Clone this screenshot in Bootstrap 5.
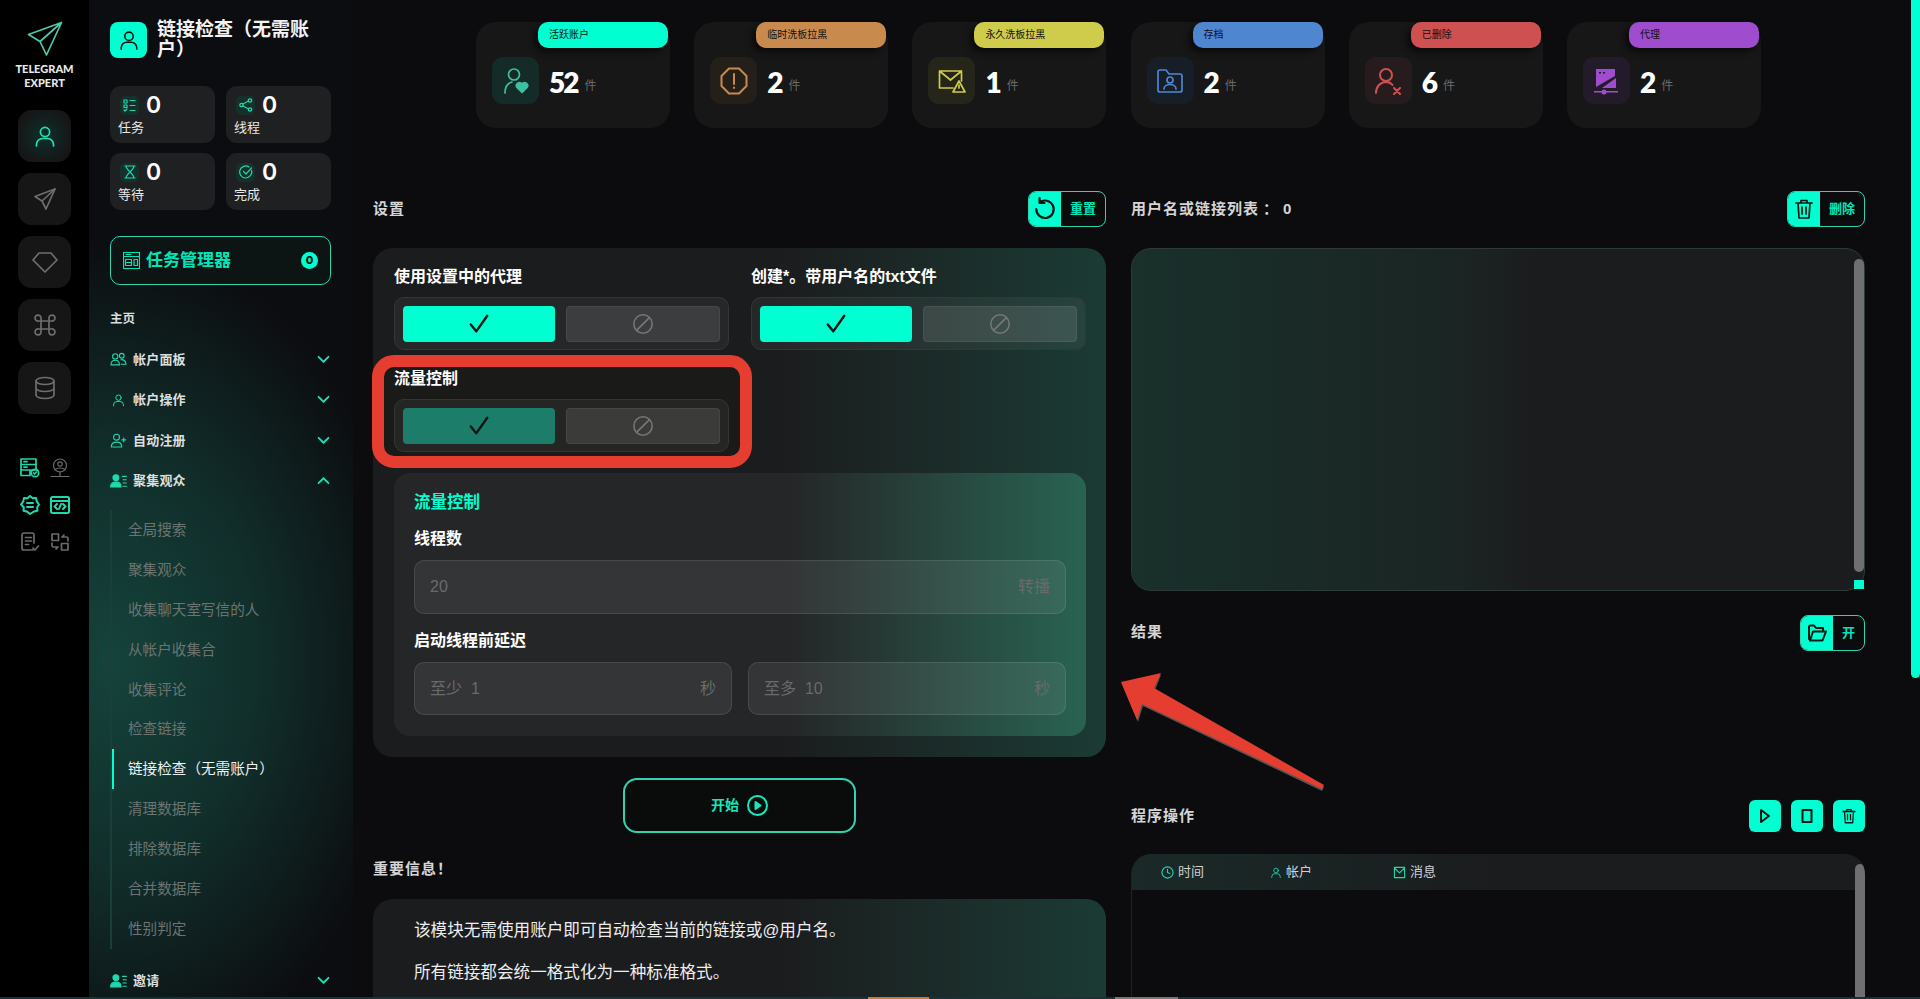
<!DOCTYPE html>
<html lang="zh-CN">
<head>
  <meta charset="UTF-8">
  <meta name="viewport" content="width=device-width, initial-scale=1">
  <title>Telegram Expert</title>
  <link href="https://cdn.jsdelivr.net/npm/bootstrap@5.3.0/dist/css/bootstrap.min.css" rel="stylesheet">
  <style>
    html, body { height: 999px; overflow: hidden; }
    body { background: #0c0c0f; color: #fff; font-family: "Liberation Sans", "Noto Sans CJK SC", sans-serif; position: relative; }
    svg { display: block; flex: none; }
    .ln { fill: none; stroke: currentColor; stroke-width: 1.7; stroke-linecap: round; stroke-linejoin: round; }
    .sw-1 { stroke-width: 1.2; }
    .sw-2 { stroke-width: 2; }
    .sw-3 { stroke-width: 2.6; }
    .flip-y { transform: scaleY(-1); }

    /* icon rail */
    .rail { width: 89px; height: 999px; background: #000; flex: none; padding-top: 21px; }
    .rail-logo { color: #4fc7ab; }
    .rail-name { font: 900 11px/14px Lato, "Liberation Sans", sans-serif; color: #e6e9e8; text-align: center; margin-top: 5px; margin-bottom: 20px; }
    .rail-btn { width: 53px; height: 52px; border-radius: 14px; background: #161617; color: #6e6e6e; margin: 0 auto 11px; }
    .rail-btn.on { color: #1fe0b4; background: radial-gradient(circle, #0f2c28 10%, #161617 75%); }
    .rail-tools { margin-top: 44px; display: grid; grid-template-columns: 20px 20px; gap: 17px 10px; justify-content: center; }
    .rail-tools svg { color: #1fd8ad; }
    .rail-tools .dim { color: #6b6b6b; }

    /* sidebar */
    .side { width: 264px; height: 999px; flex: none; padding: 22px 22px 0 21px; overflow: hidden;
      background: radial-gradient(ellipse 300px 420px at 8% 66%, #15433b 0%, #112e2b 50%, transparent 100%), #0c0d10; }
    .side-icon { width: 37px; height: 36px; border-radius: 8px; background: #00ffd1; color: #0b1512; }
    .side-head { gap: 10px; }
    .side-title { font-size: 19px; line-height: 20px; font-weight: 700; width: 160px; margin-top: -2px; color: #f2f2f2; }
    .stat-grid { display: grid; grid-template-columns: 105px 105px; gap: 10px 11px; margin-top: 26px; }
    .stat-box { height: 57px; border-radius: 11px; background: #1f2021; padding: 9px 8px 0; }
    .stat-glyph { width: 19px; height: 19px; color: #1fd8ad; border-radius: 5px; background: #16302b; margin-left: 2px; }
    .stat-num { font: 600 23px/20px Inter, sans-serif; margin-left: 7px; }
    .stat-label { font-size: 13px; line-height: 16px; margin-top: 5px; color: #e8e8e8; }
    .task-btn { height: 49px; border: 1px solid #2fd4b0; border-radius: 10px; margin-top: 26px; padding: 0 12px; color: #00e6bb; font-size: 17px; font-weight: 700; background: #0d1514; }
    .task-btn .ln { margin-right: 6px; }
    .task-count { width: 17px; height: 17px; border-radius: 50%; background: #00ffd1; color: #0b1512; font: 800 11px/17px Inter, sans-serif; text-align: center; }
    .side-home { font-size: 12.5px; font-weight: 700; margin-top: 26px; line-height: 16px; color: #dcdcdc; margin-bottom: 12px; }
    .menu-row { height: 40.5px; font-size: 13px; font-weight: 700; color: #dcdfde; letter-spacing: .2px; padding-right: 1px; }
    .menu-row svg { color: #1fd8ad; }
    .menu-row svg:first-child { margin-right: 6px; }
    .menu-row .chev { color: #1ee0b6; }
    .sub-list { border-left: 2px solid #1a3e39; padding: 0; margin: 9px 0 11.5px; list-style: none; }
    .sub-list li { height: 39.9px; line-height: 40px; padding-left: 16px; font-size: 14.6px; color: #6c7472; white-space: nowrap; position: relative; }
    .sub-list li.on { color: #eef2f1; }
    .sub-list li.on::before { content: ""; position: absolute; left: 0; top: 0; bottom: 0; width: 2px; background: #00ffd1; }

    /* main area */
    .main { flex: 1; min-width: 0; height: 999px; overflow: hidden; padding: 22px 55px 0 20px; }
    .top-stats { display: flex; gap: 24.2px; padding-left: 103px; }
    .top-card { width: 194px; height: 106px; border-radius: 20px; background: #171718; position: relative; padding: 35px 0 0 16px; }
    .top-pill { position: absolute; right: 2px; top: 0; width: 130px; height: 26px; border-radius: 10px; color: #111; font-size: 10px; line-height: 26px; padding-left: 11px; box-shadow: -4px 4px 6px rgba(0,0,0,.55); background: var(--tone); }
    .top-glyph { width: 47px; height: 47px; border-radius: 11px; color: var(--tone); background: var(--tone-dim); }
    .top-num { font: 800 28px/30px Lato, sans-serif; letter-spacing: -2px; margin: 10px 0 0 10px; }
    .top-unit { font-size: 12px; line-height: 18px; color: #6a6a6a; margin: 20px 0 0 7px; }
    .tone-a { --tone: #00ffd1; --tone-dim: #15291f; }
    .tone-a .top-glyph { color: #3fbfa1; background: #152b27; }
    .tone-b { --tone: #c98a4e; --tone-dim: #251f1a; }
    .tone-c { --tone: #cfcb4b; --tone-dim: #252519; }
    .tone-d { --tone: #4f86d0; --tone-dim: #181e28; }
    .tone-e { --tone: #cf5050; --tone-dim: #271c1d; }
    .tone-f { --tone: #a04ccf; --tone-dim: #241b2a; }
    .hole { fill: var(--tone-dim); }

    .columns { display: grid; grid-template-columns: 733px 734px; gap: 25px; margin-top: 63px; }
    .head-row { height: 36px; margin-bottom: 21px; }
    .head-text { font-size: 15px; font-weight: 700; color: #d5d5d5; letter-spacing: 1px; }
    .count-sep { font-family: "Noto Sans CJK TC", sans-serif; margin: 0 4px; }
    .split-btn { height: 36px; border: 1px solid #2fd4b0; border-radius: 8px; overflow: hidden; color: #00e6bb; font-size: 13px; font-weight: 700; }
    .split-icon { width: 32px; height: 100%; background: #00ffd1; color: #0b1512; }
    .split-txt { padding: 0 9px; background: #0a0c0c; }
    .ctl-btn { width: 32px; height: 32px; border-radius: 6px; background: #00ffd1; color: #0b1512; }
    .ctl-group { gap: 10px; }

    .panel { border-radius: 20px; background: linear-gradient(90deg, #1b1c1e 55%, #1b3b34 100%); padding: 19px 20px 21px 21px; }
    .field-row { --bs-gutter-x: 22px; --bs-gutter-y: 19px; }
    .field-label { font-size: 16px; line-height: 20px; font-weight: 700; margin-bottom: 10px; position: relative; }
    .toggle-box { height: 53px; border: 1px solid #353638; border-radius: 10px; background: rgba(255,255,255,.05); padding: 8px 8px; gap: 11px; position: relative; }
    .opt { flex: 1; height: 36px; border-radius: 4px; }
    .opt-yes { background: #00ffd1; color: #0b1512; }
    .opt-yes.off { background: #1c7d6b; }
    .opt-no { background: rgba(255,255,255,.1); border: 1px solid rgba(255,255,255,.06); color: #777; }
    .mark-zone { position: relative; }
    .mark-zone::before { content: ""; position: absolute; left: -22px; right: -23px; top: -14px; bottom: -16px; background: #1a1a18; border: 12px solid #e53e30; border-radius: 22px; }

    .sub-panel { margin-top: 21px; height: 263px; border-radius: 16px; background: linear-gradient(90deg, #252628 57%, #296352 100%); padding: 19px 20px 0 20px; }
    .sub-title { font-size: 16.5px; line-height: 20px; font-weight: 700; color: #00ffd1; margin-bottom: 17px; }
    .sub-panel .field-label { margin-bottom: 11px; }
    .num-box { height: 54px; border: 1px solid rgba(255,255,255,.1); border-radius: 10px; background: rgba(255,255,255,.07); padding: 0 15px; color: #696b6b; font-size: 16px; margin-bottom: 17px; }
    .num-pair { display: grid; grid-template-columns: 1fr 1fr; gap: 16px; }
    .num-pair .num-box { height: 53px; margin: 0; }

    .start-btn { width: 233px; height: 55px; margin: 21px auto 0; border: 2px solid #2fd4b0; border-radius: 14px; color: #18e6bb; font-size: 14px; font-weight: 700; background: #0a0c0c; }
    .info-head { margin-top: 26px; line-height: 20px; margin-bottom: 20px; }
    .info-box { height: 101px; border-radius: 20px 20px 0 0; padding: 11px 0 0 41px; font-size: 16.6px; line-height: 42px; color: #eee; }
    .info-box p { margin: 0; height: 42px; }

    .text-area { height: 343px; border-radius: 20px; border: 1px solid #2e3a37; background: linear-gradient(90deg, #19302b 0%, #1b2523 45%, #1b1c1e 55%); position: relative; }
    .bar-track { position: absolute; top: 10px; right: 0; width: 10px; bottom: 18px; border-radius: 6px; background: #6f6f72; }
    .resize-grip { position: absolute; right: 0; bottom: 1px; width: 10px; height: 9px; background: #00ffd1; }
    .result-row { margin-top: 23px; height: 37px; }
    .log-row { margin-top: 149px; height: 32px; margin-bottom: 22px; }
    .log-box { height: 145px; border-radius: 20px 20px 0 0; border-left: 1px solid #1e2322; position: relative; overflow: hidden; }
    .log-head { height: 36px; background: linear-gradient(90deg, #1a2a28 0%, #1b1c1e 50%); font-size: 13px; color: #d0d0d0; padding-left: 29px; }
    .log-head svg { color: #1fd8ad; }
    .log-col { width: 109px; }
    .log-col + .log-col { width: 123px; }
    .log-bar { position: absolute; top: 10px; right: 0; width: 10px; bottom: 0; border-radius: 6px 6px 0 0; background: #6f6f72; }

    /* page scrollbars and drawn-on arrow */
    .page-thumb { position: absolute; right: 0; top: 0; width: 9px; height: 678px; background: #00ffd1; border-radius: 0 0 5px 5px; }
    .page-floor { position: absolute; left: 0; right: 0; bottom: 0; height: 2px; background: #1d3034; }
    .floor-a { position: absolute; left: 868px; width: 61px; top: 0; bottom: 0; background: #c97a36; }
    .floor-b { position: absolute; left: 1115px; width: 63px; top: 0; bottom: 0; background: #777; }
    .arrow-mark { position: absolute; left: 1115px; top: 668px; }
  </style>
</head>
<body class="d-flex">

  <!-- shared icons -->
  <svg width="0" height="0" class="position-absolute">
    <symbol id="i-user" viewBox="0 0 24 24"><circle cx="12" cy="8" r="4.6"/><path d="M3.5 22v-1.5a6 6 0 0 1 6-6h5a6 6 0 0 1 6 6V22"/></symbol>
    <symbol id="i-send" viewBox="0 0 24 24"><path d="M22 2 2 9.5l7 4.5 4 8z"/><path d="M22 2 9 14"/></symbol>
    <symbol id="i-trash" viewBox="0 0 24 24"><path d="M4 6h16M9 6V3.5h6V6M6 6l1 15h10l1-15M10 10v7M14 10v7"/></symbol>
    <symbol id="i-down" viewBox="0 0 14 10"><path d="M1.5 2 7 7.5 12.5 2"/></symbol>
    <symbol id="i-check" viewBox="0 0 24 24"><path d="M3 12.5 9 20 21 3"/></symbol>
    <symbol id="i-ban" viewBox="0 0 24 24"><circle cx="12" cy="12" r="10"/><path d="M5 19 19 5"/></symbol>
    <symbol id="i-group" viewBox="0 0 26 20"><circle cx="8" cy="6" r="4"/><circle cx="18" cy="5" r="3.6"/><path d="M1.5 19c0-5 3-7 6.500-7s6.500 2 6.500 7zM17 11c4 0 7 2 7.500 7H17"/></symbol>
    <symbol id="i-crowd" viewBox="0 0 26 20"><circle cx="9" cy="5" r="4.500" fill="currentColor"/><path d="M1 19c0-5 3.500-7.500 8-7.500S17 14 17 19z" fill="currentColor"/><path d="M19 3h6M20 8h5M20 13h5M20 18h5"/></symbol>
  </svg>

  <!-- icon rail -->
  <aside class="rail">
    <svg class="rail-logo mx-auto" width="36" height="36" viewBox="0 0 36 36"><path class="ln" d="M34.500 1.500 1.500 13.500 13 20.500 19.500 34zM34.500 1.500 13 20.500"/></svg>
    <div class="rail-name">TELEGRAM<br>EXPERT</div>
    <div class="rail-btn on d-flex align-items-center justify-content-center"><svg class="ln" width="24" height="24"><use href="#i-user"/></svg></div>
    <div class="rail-btn d-flex align-items-center justify-content-center"><svg class="ln" width="24" height="24"><use href="#i-send"/></svg></div>
    <div class="rail-btn d-flex align-items-center justify-content-center"><svg class="ln" width="26" height="24" viewBox="0 0 26 24"><path d="M7 3h12l6 7-12 12L1 10z"/></svg></div>
    <div class="rail-btn d-flex align-items-center justify-content-center"><svg class="ln" width="24" height="24" viewBox="0 0 24 24"><path d="M8 8h8v8H8zM8 8H5.500A3 3 0 1 1 8 5.500zM16 8V5.500A3 3 0 1 1 18.500 8zM16 16h2.500a3 3 0 1 1-2.500 2.500zM8 16v2.500A3 3 0 1 1 5.500 16z"/></svg></div>
    <div class="rail-btn d-flex align-items-center justify-content-center"><svg class="ln" width="22" height="24" viewBox="0 0 22 24"><ellipse cx="11" cy="5" rx="9" ry="3.500"/><path d="M2 5v14c0 2 4 3.500 9 3.500s9-1.500 9-3.500V5M2 12c0 2 4 3.500 9 3.500s9-1.500 9-3.500"/></svg></div>
    <div class="rail-tools">
      <svg width="20" height="20" viewBox="0 0 20 20" class="ln"><path d="M1 1h15v5.500H1zM1 6.500h15V12H1zM1 12h9v5.500H1z"/><circle cx="15" cy="15" r="3.700"/><path d="M4 3.700h3M4 9.200h3M13.500 15l1 1 2-2"/></svg>
      <svg width="20" height="20" viewBox="0 0 20 20" class="ln dim sw-1"><circle cx="10" cy="7.500" r="6.500"/><circle cx="10" cy="6" r="2.200"/><path d="M5.500 11.500c1-2 8-2 9 0M1 18.500h18M10 14v4.500"/></svg>
      <svg width="20" height="20" viewBox="0 0 20 20" class="ln sw-2"><path d="M10 1l2.600 2.300 3.400-.3.700 3.300L19 9.500l-1.800 2.800.3 3.400-3.300.7L10 19l-3.200-2.600-3.300-.7.3-3.400L1 9.500l2.300-3.200.7-3.300 3.400.3z"/><path d="M7 8h6M7 12h6"/></svg>
      <svg width="20" height="20" viewBox="0 0 20 20" class="ln sw-2"><rect x="1" y="2" width="18" height="16" rx="1.500"/><path d="M1 6h18M7 9l-2.500 2.500L7 14M13 9l2.500 2.500L13 14M11 9l-2 5"/></svg>
      <svg width="20" height="20" viewBox="0 0 20 20" class="ln dim"><path d="M13 18H4a2 2 0 0 1-2-2V3a2 2 0 0 1 2-2h8a2 2 0 0 1 2 2v8M5.500 5.500h6M5.500 9h6M5.500 12.500h3M13 16l2 2 3.500-4"/></svg>
      <svg width="20" height="20" viewBox="0 0 20 20" class="ln dim"><rect x="2" y="2" width="6.500" height="6.500"/><rect x="11.500" y="11.500" width="6.500" height="6.500"/><path d="M12 5h4.500a1.500 1.500 0 0 1 1.500 1.500V9M12 5l2-2M8 15H3.500A1.500 1.500 0 0 1 2 13.500V11M8 15l-2 2"/></svg>
    </div>
  </aside>

  <!-- section sidebar -->
  <nav class="side">
    <div class="d-flex side-head">
      <div class="side-icon d-flex align-items-center justify-content-center"><svg class="ln" width="22" height="22"><use href="#i-user"/></svg></div>
      <div class="side-title">链接检查（无需账户）</div>
    </div>

    <div class="stat-grid">
      <div class="stat-box">
        <div class="d-flex align-items-center"><span class="stat-glyph d-flex align-items-center justify-content-center"><svg class="ln sw-1" width="13" height="13" viewBox="0 0 13 13"><path d="M1 1h3v3H1zM7 1.500h5M7 6.500h5M7 11.500h5M1 6h3v2.500H1zM1 11l1 1 2-2"/></svg></span><span class="stat-num">0</span></div>
        <div class="stat-label">任务</div>
      </div>
      <div class="stat-box">
        <div class="d-flex align-items-center"><span class="stat-glyph d-flex align-items-center justify-content-center"><svg class="ln sw-1" width="14" height="14" viewBox="0 0 14 14"><circle cx="2.500" cy="7" r="1.700"/><circle cx="11" cy="2.500" r="1.700"/><circle cx="11" cy="11.500" r="1.700"/><path d="M4 6l5.500-3M4 8l5.500 3"/></svg></span><span class="stat-num">0</span></div>
        <div class="stat-label">线程</div>
      </div>
      <div class="stat-box">
        <div class="d-flex align-items-center"><span class="stat-glyph d-flex align-items-center justify-content-center"><svg class="ln sw-1" width="12" height="14" viewBox="0 0 12 14"><path d="M1 1h10M1 13h10M2 1c0 4 8 8 8 12M10 1c0 4-8 8-8 12"/></svg></span><span class="stat-num">0</span></div>
        <div class="stat-label">等待</div>
      </div>
      <div class="stat-box">
        <div class="d-flex align-items-center"><span class="stat-glyph d-flex align-items-center justify-content-center"><svg class="ln sw-1" width="14" height="14" viewBox="0 0 14 14"><path d="M12.500 5.500A6 6 0 1 1 10 2M4.500 6.500 7 9l5.500-6"/></svg></span><span class="stat-num">0</span></div>
        <div class="stat-label">完成</div>
      </div>
    </div>

    <div class="task-btn d-flex align-items-center">
      <svg class="ln sw-1" width="17" height="17" viewBox="0 0 17 17"><rect x=".5" y=".5" width="16" height="16"/><path d="M.5 4.500h16M3 2.500h5M2.500 7.500h6v6h-6zM2.500 10.500h6M11 7.500h3.500v6H11z"/></svg>
      任务管理器
      <span class="task-count ms-auto">0</span>
    </div>

    <div class="side-home">主页</div>

    <div class="menu-row d-flex align-items-center"><svg class="ln" width="17" height="14"><use href="#i-group"/></svg>帐户面板<svg class="ln sw-2 chev ms-auto" width="13" height="9"><use href="#i-down"/></svg></div>
    <div class="menu-row d-flex align-items-center"><svg class="ln" width="17" height="14"><use href="#i-user"/></svg>帐户操作<svg class="ln sw-2 chev ms-auto" width="13" height="9"><use href="#i-down"/></svg></div>
    <div class="menu-row d-flex align-items-center"><svg class="ln" width="17" height="15" viewBox="0 0 26 22"><circle cx="10" cy="6" r="4.500"/><path d="M2 21c0-5 3.500-7.500 8-7.500s8 2.500 8 7.500zM21 7v6M18 10h6"/></svg>自动注册<svg class="ln sw-2 chev ms-auto" width="13" height="9"><use href="#i-down"/></svg></div>
    <div class="menu-row d-flex align-items-center"><svg class="ln" width="17" height="14"><use href="#i-crowd"/></svg>聚集观众<svg class="ln sw-2 chev flip-y ms-auto" width="13" height="9"><use href="#i-down"/></svg></div>

    <ul class="sub-list">
      <li>全局搜索</li>
      <li>聚集观众</li>
      <li>收集聊天室写信的人</li>
      <li>从帐户收集合</li>
      <li>收集评论</li>
      <li>检查链接</li>
      <li class="on">链接检查（无需账户）</li>
      <li>清理数据库</li>
      <li>排除数据库</li>
      <li>合并数据库</li>
      <li>性别判定</li>
    </ul>

    <div class="menu-row d-flex align-items-center"><svg class="ln" width="17" height="14"><use href="#i-crowd"/></svg>邀请<svg class="ln sw-2 chev ms-auto" width="13" height="9"><use href="#i-down"/></svg></div>
  </nav>

  <!-- main content -->
  <main class="main">
    <div class="top-stats">
      <div class="top-card tone-a d-flex align-items-start">
        <div class="top-pill">活跃账户</div>
        <div class="top-glyph d-flex align-items-center justify-content-center"><svg class="ln" width="26" height="28" viewBox="0 0 26 28"><circle cx="11" cy="7.500" r="5.500"/><path d="M2 26c0-6 3-10 7-11"/><path d="M19 25.500l-5-5a3 3 0 0 1 5-3.500 3 3 0 0 1 5 3.500z" fill="currentColor"/></svg></div>
        <div class="top-num">52</div><div class="top-unit">件</div>
      </div>
      <div class="top-card tone-b d-flex align-items-start">
        <div class="top-pill">临时洗板拉黑</div>
        <div class="top-glyph d-flex align-items-center justify-content-center"><svg class="ln sw-2" width="28" height="28" viewBox="0 0 28 28"><path d="M9 1.500h10l7.500 7.500v10L19 26.500H9L1.500 19V9zM14 7v10M14 20.500v.5"/></svg></div>
        <div class="top-num">2</div><div class="top-unit">件</div>
      </div>
      <div class="top-card tone-c d-flex align-items-start">
        <div class="top-pill">永久洗板拉黑</div>
        <div class="top-glyph d-flex align-items-center justify-content-center"><svg class="ln" width="28" height="26" viewBox="0 0 28 26"><path d="M15 20H1.500V3h22v10M1.500 3 12.500 12 23.500 3"/><path d="M21 13l6 11H15z"/><path d="M21 17v3"/></svg></div>
        <div class="top-num">1</div><div class="top-unit">件</div>
      </div>
      <div class="top-card tone-d d-flex align-items-start">
        <div class="top-pill">存档</div>
        <div class="top-glyph d-flex align-items-center justify-content-center"><svg class="ln" width="28" height="26" viewBox="0 0 28 26"><path d="M2 4a2 2 0 0 1 2-2h6l3 4h11a2 2 0 0 1 2 2v14a2 2 0 0 1-2 2H4a2 2 0 0 1-2-2z"/><circle cx="14" cy="12" r="3"/><path d="M8 21c0-3 3-4.500 6-4.500s6 1.500 6 4.500"/></svg></div>
        <div class="top-num">2</div><div class="top-unit">件</div>
      </div>
      <div class="top-card tone-e d-flex align-items-start">
        <div class="top-pill">已删除</div>
        <div class="top-glyph d-flex align-items-center justify-content-center"><svg class="ln sw-2" width="28" height="28" viewBox="0 0 28 28"><circle cx="12" cy="8" r="6"/><path d="M2 26c0-6 4-11 10-11 3 0 5 1 6.500 3M20 21l6 6M26 21l-6 6"/></svg></div>
        <div class="top-num">6</div><div class="top-unit">件</div>
      </div>
      <div class="top-card tone-f d-flex align-items-start">
        <div class="top-pill">代理</div>
        <div class="top-glyph d-flex align-items-center justify-content-center"><svg width="28" height="28" viewBox="0 0 28 28" fill="currentColor"><path d="M4 2h19v7L4 20zM24 11v10H10z"/><path d="M2 24h24v1.500H2z"/><circle cx="12" cy="25" r="2.500"/><path class="hole" d="M7 5h2v1.500H7zM11 5h2v1.500h-2z"/></svg></div>
        <div class="top-num">2</div><div class="top-unit">件</div>
      </div>
    </div>

    <div class="columns">
      <!-- left column -->
      <section>
        <div class="head-row d-flex align-items-center justify-content-between">
          <span class="head-text">设置</span>
          <div class="split-btn d-flex align-items-center">
            <span class="split-icon d-flex align-items-center justify-content-center"><svg class="ln sw-2" width="22" height="24" viewBox="0 0 20 22"><path d="M5 5a8 8 0 1 1-3 6M5 1v4.500h4.500"/></svg></span>
            <span class="split-txt">重置</span>
          </div>
        </div>

        <div class="panel">
          <div class="row field-row">
            <div class="col-6">
              <div class="field-label">使用设置中的代理</div>
              <div class="toggle-box d-flex">
                <div class="opt opt-yes d-flex align-items-center justify-content-center"><svg class="ln sw-3" width="22" height="22"><use href="#i-check"/></svg></div>
                <div class="opt opt-no d-flex align-items-center justify-content-center"><svg class="ln" width="22" height="22"><use href="#i-ban"/></svg></div>
              </div>
            </div>
            <div class="col-6">
              <div class="field-label">创建*。带用户名的txt文件</div>
              <div class="toggle-box d-flex">
                <div class="opt opt-yes d-flex align-items-center justify-content-center"><svg class="ln sw-3" width="22" height="22"><use href="#i-check"/></svg></div>
                <div class="opt opt-no d-flex align-items-center justify-content-center"><svg class="ln" width="22" height="22"><use href="#i-ban"/></svg></div>
              </div>
            </div>
            <div class="col-6">
              <div class="mark-zone">
                <div class="field-label">流量控制</div>
                <div class="toggle-box d-flex">
                  <div class="opt opt-yes off d-flex align-items-center justify-content-center"><svg class="ln sw-3" width="22" height="22"><use href="#i-check"/></svg></div>
                  <div class="opt opt-no d-flex align-items-center justify-content-center"><svg class="ln" width="22" height="22"><use href="#i-ban"/></svg></div>
                </div>
              </div>
            </div>
          </div>

          <div class="sub-panel">
            <div class="sub-title">流量控制</div>
            <div class="field-label">线程数</div>
            <div class="num-box d-flex align-items-center justify-content-between"><span>20</span><span>转播</span></div>
            <div class="field-label">启动线程前延迟</div>
            <div class="num-pair">
              <div class="num-box d-flex align-items-center justify-content-between"><span>至少&nbsp;&nbsp;1</span><span>秒</span></div>
              <div class="num-box d-flex align-items-center justify-content-between"><span>至多&nbsp;&nbsp;10</span><span>秒</span></div>
            </div>
          </div>
        </div>

        <div class="start-btn d-flex align-items-center justify-content-center gap-2">开始
          <svg class="ln sw-2" width="21" height="21" viewBox="0 0 21 21"><circle cx="10.500" cy="10.500" r="9.500"/><path d="M8.500 7v7l5-3.500z" fill="currentColor"/></svg>
        </div>

        <div class="head-text info-head">重要信息！</div>
        <div class="panel info-box">
          <p>该模块无需使用账户即可自动检查当前的链接或@用户名。</p>
          <p>所有链接都会统一格式化为一种标准格式。</p>
        </div>
      </section>

      <!-- right column -->
      <section>
        <div class="head-row d-flex align-items-center justify-content-between">
          <span class="head-text">用户名或链接列表<span class="count-sep">：</span>0</span>
          <div class="split-btn d-flex align-items-center">
            <span class="split-icon d-flex align-items-center justify-content-center"><svg class="ln" width="24" height="26"><use href="#i-trash"/></svg></span>
            <span class="split-txt">删除</span>
          </div>
        </div>
        <div class="text-area"><div class="bar-track"></div><div class="resize-grip"></div></div>

        <div class="result-row d-flex align-items-center justify-content-between">
          <span class="head-text">结果</span>
          <div class="split-btn d-flex align-items-center">
            <span class="split-icon d-flex align-items-center justify-content-center"><svg class="ln sw-2" width="20" height="18" viewBox="0 0 20 18"><path d="M2 15V3a1.500 1.500 0 0 1 1.500-1.500H7l2 2.500h7v3M3 16.500h12.500L19 7.500H6z"/></svg></span>
            <span class="split-txt">开</span>
          </div>
        </div>

        <div class="log-row d-flex align-items-center justify-content-between">
          <span class="head-text">程序操作</span>
          <div class="d-flex ctl-group align-items-center">
            <span class="ctl-btn d-flex align-items-center justify-content-center"><svg class="ln sw-2" width="14" height="16" viewBox="0 0 14 16"><path d="M3 2v12l8-6z"/></svg></span>
            <span class="ctl-btn d-flex align-items-center justify-content-center"><svg class="ln sw-2" width="14" height="16" viewBox="0 0 14 16"><path d="M2.500 2h9v12h-9z"/></svg></span>
            <span class="ctl-btn d-flex align-items-center justify-content-center"><svg class="ln" width="18" height="18"><use href="#i-trash"/></svg></span>
          </div>
        </div>

        <div class="log-box">
          <div class="log-head d-flex align-items-center">
            <span class="log-col d-flex align-items-center gap-1"><svg class="ln sw-1" width="13" height="13" viewBox="0 0 14 14"><circle cx="7" cy="7" r="6"/><path d="M7 3.500V7l2.500 1"/></svg>时间</span>
            <span class="log-col d-flex align-items-center gap-1"><svg class="ln" width="12" height="13"><use href="#i-user"/></svg>帐户</span>
            <span class="log-col d-flex align-items-center gap-1"><svg class="ln sw-1" width="13" height="13" viewBox="0 0 14 14"><path d="M1.500 1.500h11v11h-11zM1.500 2 7 7.500 12.500 2"/></svg>消息</span>
          </div>
          <div class="log-bar"></div>
        </div>
      </section>
    </div>
  </main>

  <!-- over everything: page scrollbars and the red arrow -->
  <div class="page-thumb"></div>
  <div class="page-floor"><div class="floor-a"></div><div class="floor-b"></div></div>
  <svg class="arrow-mark" width="215" height="126" viewBox="0 0 215 126">
    <path d="M7 16 46 7 40 22 209 119 207 123 28 38 23 54z" fill="#555"/>
    <path d="M6 14 46 5 39 20 209 117 207 121 27 36 22 52z" fill="#e53e30"/>
  </svg>

  <script src="https://cdn.jsdelivr.net/npm/bootstrap@5.3.0/dist/js/bootstrap.bundle.min.js"></script>
</body>
</html>
